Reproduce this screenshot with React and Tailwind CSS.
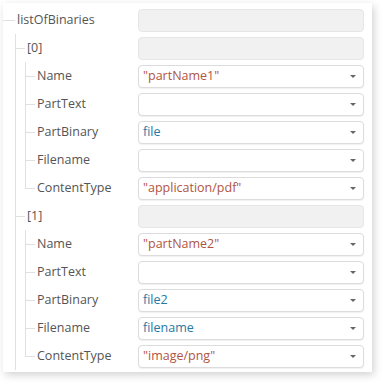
const font = { fontFamily: '"Open Sans", "Noto Sans", sans-serif' };

const tree = {
  label: "listOfBinaries",
  items: [
    {
      label: "[0]",
      fields: [
        { label: "Name", value: '"partName1"', kind: "str" },
        { label: "PartText", value: "", kind: "str" },
        { label: "PartBinary", value: "file", kind: "ref" },
        { label: "Filename", value: "", kind: "str" },
        { label: "ContentType", value: '"application/pdf"', kind: "str" },
      ],
    },
    {
      label: "[1]",
      fields: [
        { label: "Name", value: '"partName2"', kind: "str" },
        { label: "PartText", value: "", kind: "str" },
        { label: "PartBinary", value: "file2", kind: "ref" },
        { label: "Filename", value: "filename", kind: "ref" },
        { label: "ContentType", value: '"image/png"', kind: "str" },
      ],
    },
  ],
};

// disabled grey box for group rows
const EmptyBox = () => (
  <div className="w-[226px] h-[23px] rounded-[4px] bg-[#f1f1f1] border border-[#e6e6e6]" />
);

const Select = ({ value, kind }) => (
  <div className="w-[226px] h-[23px] rounded-[4px] bg-white border border-[#dcdcdc] shadow-[0_1px_1px_rgba(0,0,0,0.06)] flex items-center pl-[4px] pr-[7px]">
    <span
      className={
        "flex-1 text-[12.5px] leading-[18px] whitespace-nowrap " +
        (kind === "ref" ? "text-[#2479a3]" : "text-[#b0553f]")
      }
    >
      {value}
    </span>
    <span className="w-0 h-0 border-l-[3px] border-r-[3px] border-t-[3px] border-l-transparent border-r-transparent border-t-[#666]" />
  </div>
);

// connector with vertical line that stops at the last child
const Branch = ({ last }) => (
  <div className="w-[10px] self-stretch flex flex-col shrink-0">
    <div className="flex-1 border-l border-b border-[#e0e0e0]" />
    <div className={last ? "flex-1" : "flex-1 border-l border-[#e0e0e0]"} />
  </div>
);

const Label = ({ children }) => (
  <span className="flex-1 ml-[2px] text-[12.5px] text-[#555]">{children}</span>
);

export default function App() {
  return (
    <div className="w-[388px] h-[387px] bg-white pt-[3px] pl-[3px]" style={font}>
      <div className="w-[369px] bg-white shadow-[2px_3px_8px_rgba(0,0,0,0.18)] pt-[3px] pb-[2px] pr-[8px]">
        {/* root */}
        <div className="h-[28px] flex items-center">
          <div className="w-[12px] h-px bg-[#e0e0e0]" />
          <Label>{tree.label}</Label>
          <EmptyBox />
        </div>

        <div className="ml-[12px] border-l border-[#e0e0e0]">
          {tree.items.map((item) => (
            <div key={item.label}>
              <div className="h-[28px] flex items-center">
                <div className="w-[9px] h-px bg-[#e0e0e0]" />
                <Label>{item.label}</Label>
                <EmptyBox />
              </div>

              <div className="ml-[9px]">
                {item.fields.map((f, i) => (
                  <div key={f.label} className="h-[28px] flex items-center">
                    <Branch last={i === item.fields.length - 1} />
                    <Label>{f.label}</Label>
                    <Select value={f.value} kind={f.kind} />
                  </div>
                ))}
              </div>
            </div>
          ))}
        </div>
      </div>
    </div>
  );
}
